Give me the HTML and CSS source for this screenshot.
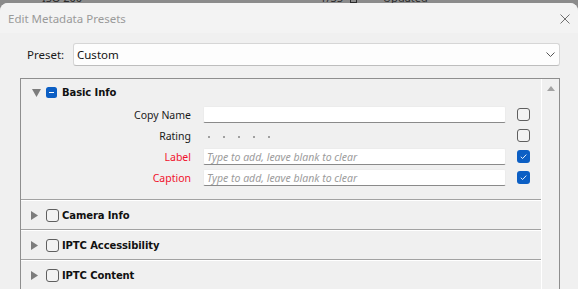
FILE: index.html
```html
<!DOCTYPE html>
<html>
<head>
<meta charset="utf-8">
<link rel="stylesheet" href="styles.css">
</head>
<body>
<div class="backdrop">
  <span class="bg-iso">ISO 200</span>
  <span class="bg-shutter">1/35</span>
  <span class="bg-box"></span>
  <span class="bg-updated">Updated</span>
</div>
<div class="dialog">
  <div class="titlebar">
    <span class="title">Edit Metadata Presets</span>
    <svg class="close" width="10" height="10" viewBox="0 0 10 10"><path d="M0.5 0.5 L9.5 9.5 M9.5 0.5 L0.5 9.5" stroke="#707070" stroke-width="1" fill="none"/></svg>
  </div>
  <div class="body">
    <div class="preset-row">
      <span class="preset-label">Preset:</span>
      <div class="select">
        <span class="select-value">Custom</span>
        <svg class="chevron" width="9" height="5" viewBox="0 0 9 5"><path d="M0.5 0.5 L4.5 4.5 L8.5 0.5" stroke="#555" stroke-width="1" fill="none"/></svg>
      </div>
    </div>
    <div class="panel">
      <div class="list">
        <section class="group basic">
          <div class="group-header">
            <svg class="tri-down" width="9" height="8" viewBox="0 0 9 8"><polygon points="0,0 9,0 4.5,8" fill="#7c7c7c"/></svg>
            <span class="cb cb-mixed"><svg width="11" height="11" viewBox="0 0 11 11"><path d="M3 5.5 H8" stroke="#fff" stroke-width="1.2"/></svg></span>
            <span class="group-title">Basic Info</span>
          </div>
          <div class="row">
            <span class="row-label">Copy Name</span>
            <div class="field"></div>
            <span class="cb cb-off"></span>
          </div>
          <div class="row">
            <span class="row-label">Rating</span>
            <div class="rating"><i></i><i></i><i></i><i></i><i></i></div>
            <span class="cb cb-off"></span>
          </div>
          <div class="row">
            <span class="row-label required">Label</span>
            <div class="field"><span class="placeholder">Type to add, leave blank to clear</span></div>
            <span class="cb cb-on"><svg width="13" height="13" viewBox="0 0 13 13"><path d="M3.8 6.8 L5.6 8.5 L9.3 4.6" stroke="#fff" stroke-width="0.9" fill="none"/></svg></span>
          </div>
          <div class="row">
            <span class="row-label required">Caption</span>
            <div class="field"><span class="placeholder">Type to add, leave blank to clear</span></div>
            <span class="cb cb-on"><svg width="13" height="13" viewBox="0 0 13 13"><path d="M3.8 6.8 L5.6 8.5 L9.3 4.6" stroke="#fff" stroke-width="0.9" fill="none"/></svg></span>
          </div>
        </section>
        <section class="group">
          <div class="group-header collapsed">
            <svg class="tri-right" width="7" height="9" viewBox="0 0 7 9"><polygon points="0,0 7,4.5 0,9" fill="#7c7c7c"/></svg>
            <span class="cb cb-off head-cb"></span>
            <span class="group-title">Camera Info</span>
          </div>
        </section>
        <section class="group">
          <div class="group-header collapsed">
            <svg class="tri-right" width="7" height="9" viewBox="0 0 7 9"><polygon points="0,0 7,4.5 0,9" fill="#7c7c7c"/></svg>
            <span class="cb cb-off head-cb"></span>
            <span class="group-title">IPTC Accessibility</span>
          </div>
        </section>
        <section class="group">
          <div class="group-header collapsed">
            <svg class="tri-right" width="7" height="9" viewBox="0 0 7 9"><polygon points="0,0 7,4.5 0,9" fill="#7c7c7c"/></svg>
            <span class="cb cb-off head-cb"></span>
            <span class="group-title">IPTC Content</span>
          </div>
        </section>
      </div>
      <div class="scrollbar">
        <svg class="scroll-up" width="8" height="5" viewBox="0 0 8 5"><polygon points="0,5 8,5 4,0" fill="#a3a3a3"/></svg>
      </div>
    </div>
  </div>
</div>
</body>
</html>
```

FILE: styles.css
```css
* { box-sizing: border-box; }

html, body {
  margin: 0;
  padding: 0;
}

body {
  width: 578px;
  height: 289px;
  overflow: hidden;
  background: #8b8b8b;
  font-family: "Noto Sans", "Liberation Sans", sans-serif;
  color: #1a1a1a;
}

.backdrop {
  height: 3px;
  overflow: hidden;
  display: flex;
  align-items: flex-start;
  font-size: 11px;
  line-height: 11px;
  color: #2c2c2c;
}

.backdrop span { margin-top: -8px; }
.bg-iso { margin-left: 42px; }
.bg-shutter { margin-left: 238px; }
.bg-box {
  width: 7px;
  height: 11px;
  border: 1px solid #2c2c2c;
  margin-left: 7px;
}
.bg-updated { margin-left: 26px; }

.dialog {
  height: 286px;
  background: #f0f0f0;
  border-radius: 8px 8px 0 0;
  overflow: hidden;
}

.titlebar {
  height: 30px;
  background: #f3f3f3;
  display: flex;
  align-items: center;
  justify-content: space-between;
  padding: 0 8px 0 8px;
}

.title {
  font-size: 11.5px;
  color: #9a9a9a;
  margin-top: 1px;
}

.close { display: block; margin-top: 1px; }

.body {
  padding: 10px 18px 0 20px;
}

.preset-row {
  display: flex;
  align-items: center;
  height: 23px;
}

.preset-label {
  font-size: 11.5px;
  padding-left: 7px;
  width: 53px;
  color: #1a1a1a;
}

.select {
  flex: 1;
  height: 23px;
  background: #fdfdfd;
  border: 1px solid #d6d6d6;
  border-bottom-color: #bdbdbd;
  border-radius: 3px;
  display: flex;
  align-items: center;
  justify-content: space-between;
  padding: 0 4px 0 3px;
}

.select-value {
  font-size: 11.5px;
  color: #111;
}

.chevron { display: block; }

.panel {
  margin-top: 12px;
  height: 230px;
  border: 1px solid #8e8e8e;
  display: flex;
}

.list {
  flex: 1;
}

.scrollbar {
  width: 18px;
  border-left: 1px solid #ffffff;
  display: flex;
  justify-content: center;
  padding-top: 7px;
  padding-left: 1px;
}

.scroll-up { display: block; }

.group {
  border-bottom: 1px solid #a2a2a2;
}

.group + .group {
  border-top: 1px solid #ffffff;
}

.group.basic {
  padding-bottom: 13px;
}

.group-header {
  height: 27px;
  display: flex;
  align-items: center;
  padding-left: 10px;
}

.group-header.collapsed {
  height: 28px;
}

.tri-down {
  display: block;
  margin-left: 1px;
  margin-right: 5px;
  margin-top: 1px;
}

.tri-right {
  display: block;
  margin-right: 8px;
}

.group-title {
  font-family: "DejaVu Sans", sans-serif;
  font-weight: bold;
  font-size: 10px;
  color: #111;
  letter-spacing: -0.1px;
}

.cb {
  display: inline-block;
  flex: none;
  width: 13px;
  height: 13px;
  border-radius: 3px;
}

.cb svg { display: block; }

.cb-off {
  border: 1px solid #5f5f5f;
  background: #f3f3f3;
}

.cb-on {
  background: #0c5fc4;
}

.cb-mixed {
  width: 11px;
  height: 11px;
  background: #0c5fc4;
  border-radius: 2.5px;
  margin-right: 5px;
}

.head-cb {
  margin-right: 3px;
}

.row {
  display: flex;
  align-items: center;
  height: 17px;
}

.row + .row {
  margin-top: 4px;
}

.row-label {
  width: 170px;
  text-align: right;
  font-size: 10.5px;
  color: #1a1a1a;
}

.row-label.required {
  color: #f0102c;
}

.field {
  width: 303px;
  height: 17px;
  margin-left: 12px;
  background: #ffffff;
  border: 1px solid #ececec;
  border-bottom-color: #8a8a8a;
  border-radius: 2px;
  display: flex;
  align-items: center;
  padding-left: 3px;
}

.placeholder {
  font-size: 10.5px;
  font-style: italic;
  color: #9c9c9c;
}

.rating {
  width: 303px;
  margin-left: 12px;
  display: flex;
  gap: 13px;
  padding-left: 5px;
  padding-top: 2px;
}

.rating i {
  display: block;
  width: 2px;
  height: 2px;
  background: #a0a0a0;
}

.row .cb {
  margin-left: 11px;
}
```
